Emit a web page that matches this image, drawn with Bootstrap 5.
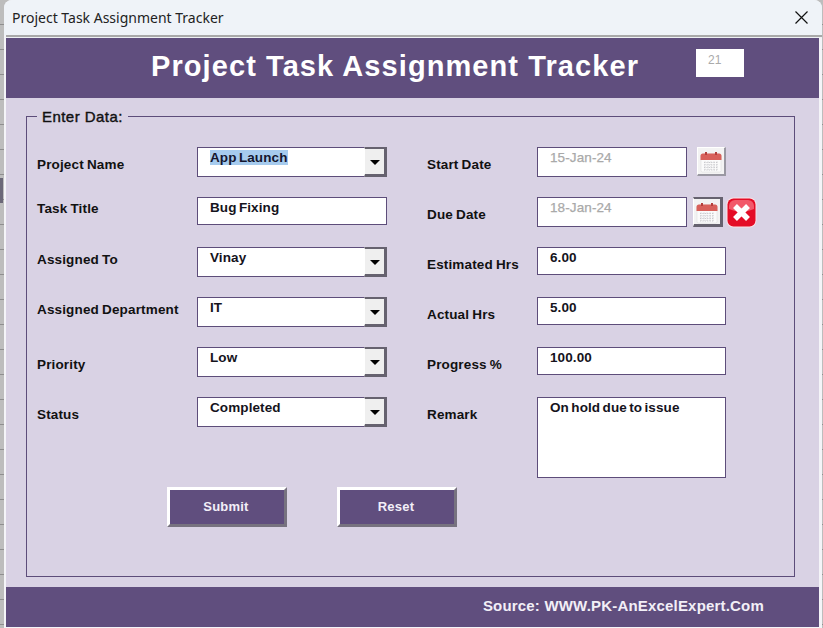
<!DOCTYPE html>
<html lang="en"><head><meta charset="utf-8"><title>Project Task Assignment Tracker</title>
<link href="https://cdn.jsdelivr.net/npm/bootstrap@5.3.0/dist/css/bootstrap.min.css" rel="stylesheet">
<style>
html,body{margin:0;height:628px;overflow:hidden;}
body{font-family:"Liberation Sans",Arial,sans-serif;color:#111;position:relative;background:repeating-linear-gradient(180deg,#bdbdbd 0,#bdbdbd 24px,#8f8f8f 24px,#8f8f8f 25px);}
.sheetdark{position:absolute;left:0;top:178px;width:3px;height:25px;background:#6b6878;}
.win{position:relative;height:628px;margin-left:4px;margin-right:1px;background:#f4f4f8;border-radius:8px 8px 0 0;overflow:hidden;}
.titlebar{height:35px;background:#eff3f8;padding-left:8px;padding-right:14px;font:14px "Noto Sans",sans-serif;color:#222;}
.rule{height:3px;background:#a9a9a9;border-bottom:1px solid #eef0f4;margin-left:2px;}
.pane{margin:0 3px 0 2px;height:589px;background:#d9d2e4;}
.banner{height:60px;background:#604e7e;color:#fff;position:relative;}
.banner h1{font:bold 29px "Liberation Sans",sans-serif;letter-spacing:1.08px;margin:0;padding-left:145px;line-height:57px;}
.counter{position:absolute;left:690px;top:11px;width:48px;height:28px;background:#fff;color:#aaa;font-size:12px;padding:2px 0 0 12px;}
.framebox{position:relative;margin:18px 24px 0 20px;height:461px;border:1px solid #5d4d7a;}
.legendtext{position:absolute;left:10px;top:-9px;background:#d9d2e4;padding:0 5px;font-size:15px;line-height:18px;-webkit-text-stroke:.4px #111;letter-spacing:.45px;}
.cols{display:flex;padding-top:30px;height:370px;}
.colA{width:400px;padding-left:10px;}
.rowline{display:flex;align-items:flex-start;height:50px;}
.lbl{font-size:13.5px;font-weight:700;letter-spacing:.15px;word-spacing:-.8px;line-height:16px;}
.colA .lbl{width:160px;}
.colB .lbl{width:110px;}
.drop4{padding-top:4px;}.drop5{padding-top:5px;}.drop10{padding-top:10px;}
.field{height:28px;background:#fff;border:1px solid #5d4d7a;font-size:13.5px;font-weight:700;letter-spacing:.1px;word-spacing:-1.5px;line-height:16px;padding:2px 0 0 12px;position:relative;color:#15131c;}
.f30{height:30px;}
.w190{width:190px;}.w150{width:150px;color:#a9a9a9;font-weight:400;word-spacing:0;-webkit-text-stroke:.25px #a9a9a9;}.w189{width:189px;}
.tall{height:81px;}
.sel{background:#a6cbee;color:#14162e;}
.dropbtn{position:absolute;right:-1px;top:-1px;bottom:-1px;width:23px;background:#efefef;border:solid;border-width:2px 3px 3px 1px;border-color:#66626f #66626f #66626f #fff;display:flex;align-items:center;justify-content:center;}
.tri{width:0;height:0;border-left:5px solid transparent;border-right:5px solid transparent;border-top:5px solid #000;margin-top:2px;}
.calbtn{width:29px;height:29px;background:#f3f3f3;border:solid;border-width:1px 2px 2px 1px;border-color:#fff #9a98a2 #9a98a2 #fff;display:flex;align-items:center;justify-content:center;flex:none;margin-left:10px;}
.calbtn.darkedge{width:30px;height:30px;margin-left:6px;border-width:2px 3px 3px 1px;border-color:#66626f #66626f #66626f #fff;}
.xbtn{margin-left:3px;flex:none;}
.actions{display:flex;gap:50px;padding-left:140px;}
.pushbtn{width:120px;height:40px;background:#604e7e;color:#f3eef8;font-size:13px;font-weight:700;letter-spacing:.2px;border:solid;border-width:3px;border-color:#fff #77727f #77727f #fff;border-radius:0;padding:0 2px 0 0;}
.foot{height:40px;margin-top:10px;background:#604e7e;color:#f2eff7;font-size:15px;font-weight:700;letter-spacing:.19px;text-align:right;padding:10px 55px 0 0;line-height:18px;}
</style></head>
<body>
<div class="sheetdark"></div>
<svg width="0" height="0" class="d-block position-absolute"><defs><symbol id="calico" viewBox="0 0 24 24"><rect x="2" y="5" width="20" height="18" rx="1.500" fill="#fbfbfb" stroke="#d8d8d8" stroke-width=".5"/><path d="M1.500 11V7a2.500 2.500 0 0 1 2.500-2.500h16a2.500 2.500 0 0 1 2.500 2.500v4z" fill="#d8605a"/><path d="M6 3h2v3H6zM16 3h2v3h-2z" fill="#b4403c"/><path d="M5 13.500h14M5 16h14M5 18.500h14M5 21h14M6 12.500v9M9 12.500v9M12 12.500v9M15 12.500v9M18 12.500v9" stroke="#c4c4c8" stroke-width=".9" stroke-dasharray="1.200 1.200" fill="none"/></symbol></defs></svg>
<div class="win">
  <div class="titlebar d-flex align-items-center justify-content-between">
    <span>Project Task Assignment Tracker</span>
    <svg width="13" height="13" viewBox="0 0 13 13" aria-label="Close"><path d="M.5.5l12 12M12.500.5l-12 12" stroke="#111" stroke-width="1.200" fill="none"/></svg>
  </div>
  <div class="rule"></div>
  <div class="pane">
    <div class="banner"><h1>Project Task Assignment Tracker</h1><div class="counter">21</div></div>
    <div class="framebox">
      <div class="legendtext">Enter Data:</div>
      <div class="cols">
        <div class="colA">
          <div class="rowline"><div class="lbl drop10">Project Name</div><div class="field f30 w190"><span class="sel">App Launch</span><span class="dropbtn"><span class="tri"></span></span></div></div>
          <div class="rowline"><div class="lbl drop4">Task Title</div><div class="field w190">Bug Fixing</div></div>
          <div class="rowline"><div class="lbl drop5">Assigned To</div><div class="field f30 w190">Vinay<span class="dropbtn"><span class="tri"></span></span></div></div>
          <div class="rowline"><div class="lbl drop5">Assigned Department</div><div class="field f30 w190">IT<span class="dropbtn"><span class="tri"></span></span></div></div>
          <div class="rowline"><div class="lbl drop10">Priority</div><div class="field f30 w190">Low<span class="dropbtn"><span class="tri"></span></span></div></div>
          <div class="rowline"><div class="lbl drop10">Status</div><div class="field f30 w190">Completed<span class="dropbtn"><span class="tri"></span></span></div></div>
        </div>
        <div class="colB">
          <div class="rowline"><div class="lbl drop10">Start Date</div><div class="field f30 w150">15-Jan-24</div><div class="calbtn"><svg width="24" height="24"><use href="#calico"/></svg></div></div>
          <div class="rowline"><div class="lbl drop10">Due Date</div><div class="field f30 w150">18-Jan-24</div><div class="calbtn darkedge"><svg width="24" height="24"><use href="#calico"/></svg></div>
            <svg class="xbtn" width="31" height="31" viewBox="0 0 31 31"><rect x=".5" y=".5" width="30" height="30" rx="7" fill="#fbe3e6"/><rect x="1.500" y="1.500" width="28" height="28" rx="6" fill="#e40c26"/><path d="M3 9a6 6 0 0 1 6-6h13a6 6 0 0 1 6 6v3a30 30 0 0 1-25 0z" fill="#f2596a"/><path d="M9 9l13 13M22 9L9 22" stroke="#fff" stroke-width="5.500"/></svg></div>
          <div class="rowline"><div class="lbl drop10">Estimated Hrs</div><div class="field w189">6.00</div></div>
          <div class="rowline"><div class="lbl drop10">Actual Hrs</div><div class="field w189">5.00</div></div>
          <div class="rowline"><div class="lbl drop10">Progress %</div><div class="field w189">100.00</div></div>
          <div class="rowline"><div class="lbl drop10">Remark</div><div class="field w189 tall">On hold due to issue</div></div>
        </div>
      </div>
      <div class="actions"><button type="button" class="btn pushbtn">Submit</button><button type="button" class="btn pushbtn">Reset</button></div>
    </div>
    <div class="foot">Source: WWW.PK-AnExcelExpert.Com</div>
  </div>
</div>
</body></html>
